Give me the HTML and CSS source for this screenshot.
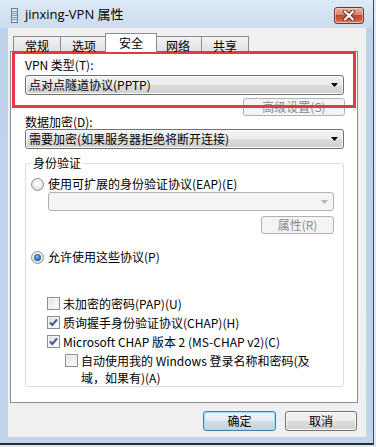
FILE: index.html
```html
<!DOCTYPE html>
<html lang="zh-CN">
<head>
    <meta charset="UTF-8">
    <title>jinxing-VPN 属性</title>
    <link rel="stylesheet" href="styles.css">
</head>
<body>
    <div class="window">
        <!-- заголовок окна -->
        <div class="titlebar">
            <svg class="app-icon" width="7" height="15" viewBox="0 0 7 15">
                <rect x="0.5" y="0.5" width="6" height="14" fill="#e4eaf1" stroke="#6a7c8f"/>
                <path d="M1 3.5h5M1 5.5h5M1 7.5h5M1 9.5h5M1 11.5h5" stroke="#8595a6" stroke-width="1"/>
            </svg>
            <span class="title">jinxing-VPN 属性</span>
            <div class="close-btn">
                <svg width="14" height="11" viewBox="0 0 14 11">
                    <path d="M3 1.5L11 9.5M11 1.5L3 9.5" stroke="#6b2a22" stroke-width="4" stroke-linecap="round"/>
                    <path d="M3 1.5L11 9.5M11 1.5L3 9.5" stroke="#ffffff" stroke-width="2.2" stroke-linecap="round"/>
                </svg>
            </div>
        </div>

        <div class="client">
            <div class="tabs">
                <div class="tab">常规</div>
                <div class="tab">选项</div>
                <div class="tab active">安全</div>
                <div class="tab">网络</div>
                <div class="tab">共享</div>
            </div>

            <div class="panel">
                <div class="label first">VPN 类型(T):</div>
                <div class="combo">
                    <span class="combo-text">点对点隧道协议(PPTP)</span>
                    <svg class="arrow" width="7" height="4" viewBox="0 0 7 4"><polygon points="0,0 7,0 3.5,4" fill="#000"/></svg>
                </div>
                <div class="btn-row">
                    <div class="btn disabled adv-btn">高级设置(S)</div>
                </div>

                <div class="label">数据加密(D):</div>
                <div class="combo combo-enc">
                    <span class="combo-text">需要加密(如果服务器拒绝将断开连接)</span>
                    <svg class="arrow" width="7" height="4" viewBox="0 0 7 4"><polygon points="0,0 7,0 3.5,4" fill="#000"/></svg>
                </div>

                <fieldset class="group">
                    <legend>身份验证</legend>
                    <div class="group-body">
                        <div class="option">
                            <span class="radio"></span>使用可扩展的身份验证协议(EAP)(E)
                        </div>
                        <div class="combo disabled eap-combo">
                            <span class="combo-text"></span>
                            <svg class="arrow" width="7" height="4" viewBox="0 0 7 4"><polygon points="0,0 7,0 3.5,4" fill="#b5b5b5"/></svg>
                        </div>
                        <div class="btn-row">
                            <div class="btn disabled prop-btn">属性(R)</div>
                        </div>

                        <div class="option allow">
                            <span class="radio on"></span>允许使用这些协议(P)
                        </div>

                        <div class="check-row first-check">
                            <span class="check"></span>未加密的密码(PAP)(U)
                        </div>
                        <div class="check-row">
                            <span class="check on">
                                <svg width="11" height="11" viewBox="0 0 11 11"><path d="M2 5.5L4.3 8L9 2.5" fill="none" stroke="#3d5a98" stroke-width="2"/></svg>
                            </span>质询握手身份验证协议(CHAP)(H)
                        </div>
                        <div class="check-row">
                            <span class="check on">
                                <svg width="11" height="11" viewBox="0 0 11 11"><path d="M2 5.5L4.3 8L9 2.5" fill="none" stroke="#3d5a98" stroke-width="2"/></svg>
                            </span>Microsoft CHAP 版本 2 (MS-CHAP v2)(C)
                        </div>
                        <div class="check-row sub-check">
                            <span class="check"></span>
                            <span class="check-text">自动使用我的 Windows 登录名称和密码(及<br>域，如果有)(A)</span>
                        </div>
                    </div>
                </fieldset>
            </div>

            <div class="actions">
                <div class="btn default ok-btn">确定</div>
                <div class="btn cancel-btn">取消</div>
            </div>
        </div>

        <!-- красная рамка-выделение поверх окна -->
        <div class="highlight"></div>
    </div>
</body>
</html>
```

FILE: styles.css
```css
body {
    margin: 0;
    background: #dfe9f5;
    font-family: "Noto Sans CJK SC", sans-serif;
    font-size: 12px;
    color: #000;
}

.window {
    position: relative;
    width: 374px;
    height: 445px;
    box-sizing: border-box;
    border-right: 1px solid #3e4a58;
    border-bottom: 2px solid #2e2e2e;
    background: linear-gradient(to bottom, #dde9f5 0, #cbdcef 28px, #bcd3ea 28px, #bed5ec 100%);
    display: flex;
    flex-direction: column;
}

/* Заголовок */
.titlebar {
    height: 28px;
    display: flex;
    align-items: flex-start;
    padding: 0 9px 0 11px;
}

.app-icon {
    margin-top: 8px;
}

.title {
    margin-left: 7px;
    margin-top: 6px;
    line-height: 17px;
    font-family: "Open Sans", "Noto Sans CJK SC", sans-serif;
    font-size: 13px;
    color: #000;
}

.close-btn {
    margin-left: auto;
    margin-top: 7px;
    width: 30px;
    height: 17px;
    box-sizing: border-box;
    border: 1px solid #70352c;
    border-radius: 3px;
    background: linear-gradient(to bottom, #eab1a4 0%, #d9816d 45%, #c24a33 50%, #c8563d 75%, #de8a6f 100%);
    box-shadow: inset 0 0 0 1px rgba(255, 230, 220, 0.5);
    display: flex;
    align-items: center;
    justify-content: center;
}

/* Клиентская область */
.client {
    margin: 0 7px 0 8px;
    height: 409px;
    box-sizing: border-box;
    padding-top: 5px;
    background: #f0f0f0;
    display: flex;
    flex-direction: column;
}

.tabs {
    display: flex;
    align-items: flex-end;
    height: 18px;
    margin-left: 5px;
    position: relative;
    z-index: 1;
}

.tab {
    width: 48px;
    height: 15px;
    box-sizing: border-box;
    margin-right: -1px;
    border: 1px solid #898c95;
    border-bottom: none;
    background: linear-gradient(to bottom, #f3f3f3, #e1e1e1);
    text-align: center;
    line-height: 15px;
    padding-top: 1px;
}

.tab.active {
    width: 52px;
    height: 19px;
    margin-left: -2px;
    margin-right: -3px;
    margin-bottom: -1px;
    background: #fff;
    line-height: 16px;
    padding-top: 1px;
    position: relative;
}

.panel {
    margin-left: 2px;
    width: 348px;
    height: 352px;
    box-sizing: border-box;
    border: 1px solid #898c95;
    background: #fff;
    padding: 7px 13px 0 14px;
}

.label {
    line-height: 12px;
    height: 12px;
}

/* Комбобоксы */
.combo {
    margin-top: 4px;
    height: 20px;
    box-sizing: border-box;
    border: 1px solid #707070;
    border-radius: 3px;
    background: linear-gradient(to bottom, #f2f2f2 0%, #ebebeb 50%, #dddddd 50%, #cfcfcf 100%);
    box-shadow: inset 0 0 0 1px #fbfbfb;
    display: flex;
    align-items: center;
    padding: 0 5px 0 3px;
}

.combo-text {
    flex: 1;
    line-height: 16px;
}

.combo-enc {
    margin-top: 1px;
}

.combo.disabled {
    border-color: #adb2b5;
    background: #f4f4f4;
    box-shadow: none;
}

.eap-combo {
    margin: 1px 0 0 17px;
    height: 19px;
}

/* Кнопки */
.btn-row {
    display: flex;
    justify-content: flex-end;
}

.btn {
    height: 20px;
    box-sizing: border-box;
    border: 1px solid #707070;
    border-radius: 3px;
    background: linear-gradient(to bottom, #f2f2f2 0%, #ebebeb 50%, #dddddd 50%, #cfcfcf 100%);
    box-shadow: inset 0 0 0 1px #fcfcfc;
    text-align: center;
    line-height: 17px;
}

.btn.disabled {
    border-color: #adb2b5;
    background: #f4f4f4;
    box-shadow: none;
    color: #8a8a8a;
}

.adv-btn {
    margin-top: 3px;
    margin-right: -1px;
    width: 102px;
    height: 18px;
    line-height: 16px;
}

.prop-btn {
    margin-top: 5px;
    width: 73px;
    height: 18px;
    line-height: 16px;
}

/* Группа */
.group {
    margin: 7px 0 0 0;
    padding: 0;
    min-width: 0;
    border: 1px solid #d5dfe5;
    border-radius: 3px;
}

.group legend {
    margin-left: 5px;
    padding: 0 2px;
    line-height: 14px;
}

.group-body {
    padding: 7px 9px 0 5px;
}

.option {
    display: flex;
    align-items: center;
    height: 14px;
    line-height: 14px;
}

.option.allow {
    margin-top: 16px;
}

.radio {
    width: 13px;
    height: 13px;
    box-sizing: border-box;
    margin-right: 4px;
    border: 1px solid #8f9092;
    border-radius: 50%;
    background: radial-gradient(circle at 50% 40%, #ffffff 0%, #f0f0f0 45%, #c9c9c9 100%);
    display: flex;
    align-items: center;
    justify-content: center;
}

.radio.on::after {
    content: "";
    width: 7px;
    height: 7px;
    border-radius: 50%;
    background: radial-gradient(circle at 45% 40%, #7cc3f3 0%, #2e74c2 45%, #173f73 100%);
}

.check-row {
    display: flex;
    align-items: flex-start;
    margin: 5px 0 0 16px;
    line-height: 14px;
}

.first-check {
    margin-top: 33px;
}

.sub-check {
    margin-left: 34px;
}

.check-text {
    line-height: 17px;
    margin-top: -2px;
}

.check {
    width: 13px;
    height: 13px;
    box-sizing: border-box;
    margin-right: 3px;
    border: 1px solid #8f8f8f;
    background: linear-gradient(135deg, #dcdcdc 0%, #f4f4f4 60%, #ffffff 100%);
    box-shadow: inset 0 0 0 1px #f4f4f4;
    display: flex;
    align-items: center;
    justify-content: center;
}

/* Действия внизу */
.actions {
    display: flex;
    justify-content: flex-end;
    gap: 9px;
    margin-top: 8px;
    margin-right: 9px;
}

.ok-btn {
    width: 73px;
}

.cancel-btn {
    width: 72px;
}

.btn.default {
    border-color: #3c7fb1;
    box-shadow: inset 0 0 0 1px #9fe0f8;
    background: linear-gradient(to bottom, #eef3f6 0%, #e6ecef 50%, #d5dde2 50%, #c9d2d7 100%);
}

/* Красная рамка */
.highlight {
    position: absolute;
    left: 12px;
    top: 51px;
    width: 344px;
    height: 57px;
    box-sizing: border-box;
    border: 3px solid #e8383d;
    pointer-events: none;
}
```
